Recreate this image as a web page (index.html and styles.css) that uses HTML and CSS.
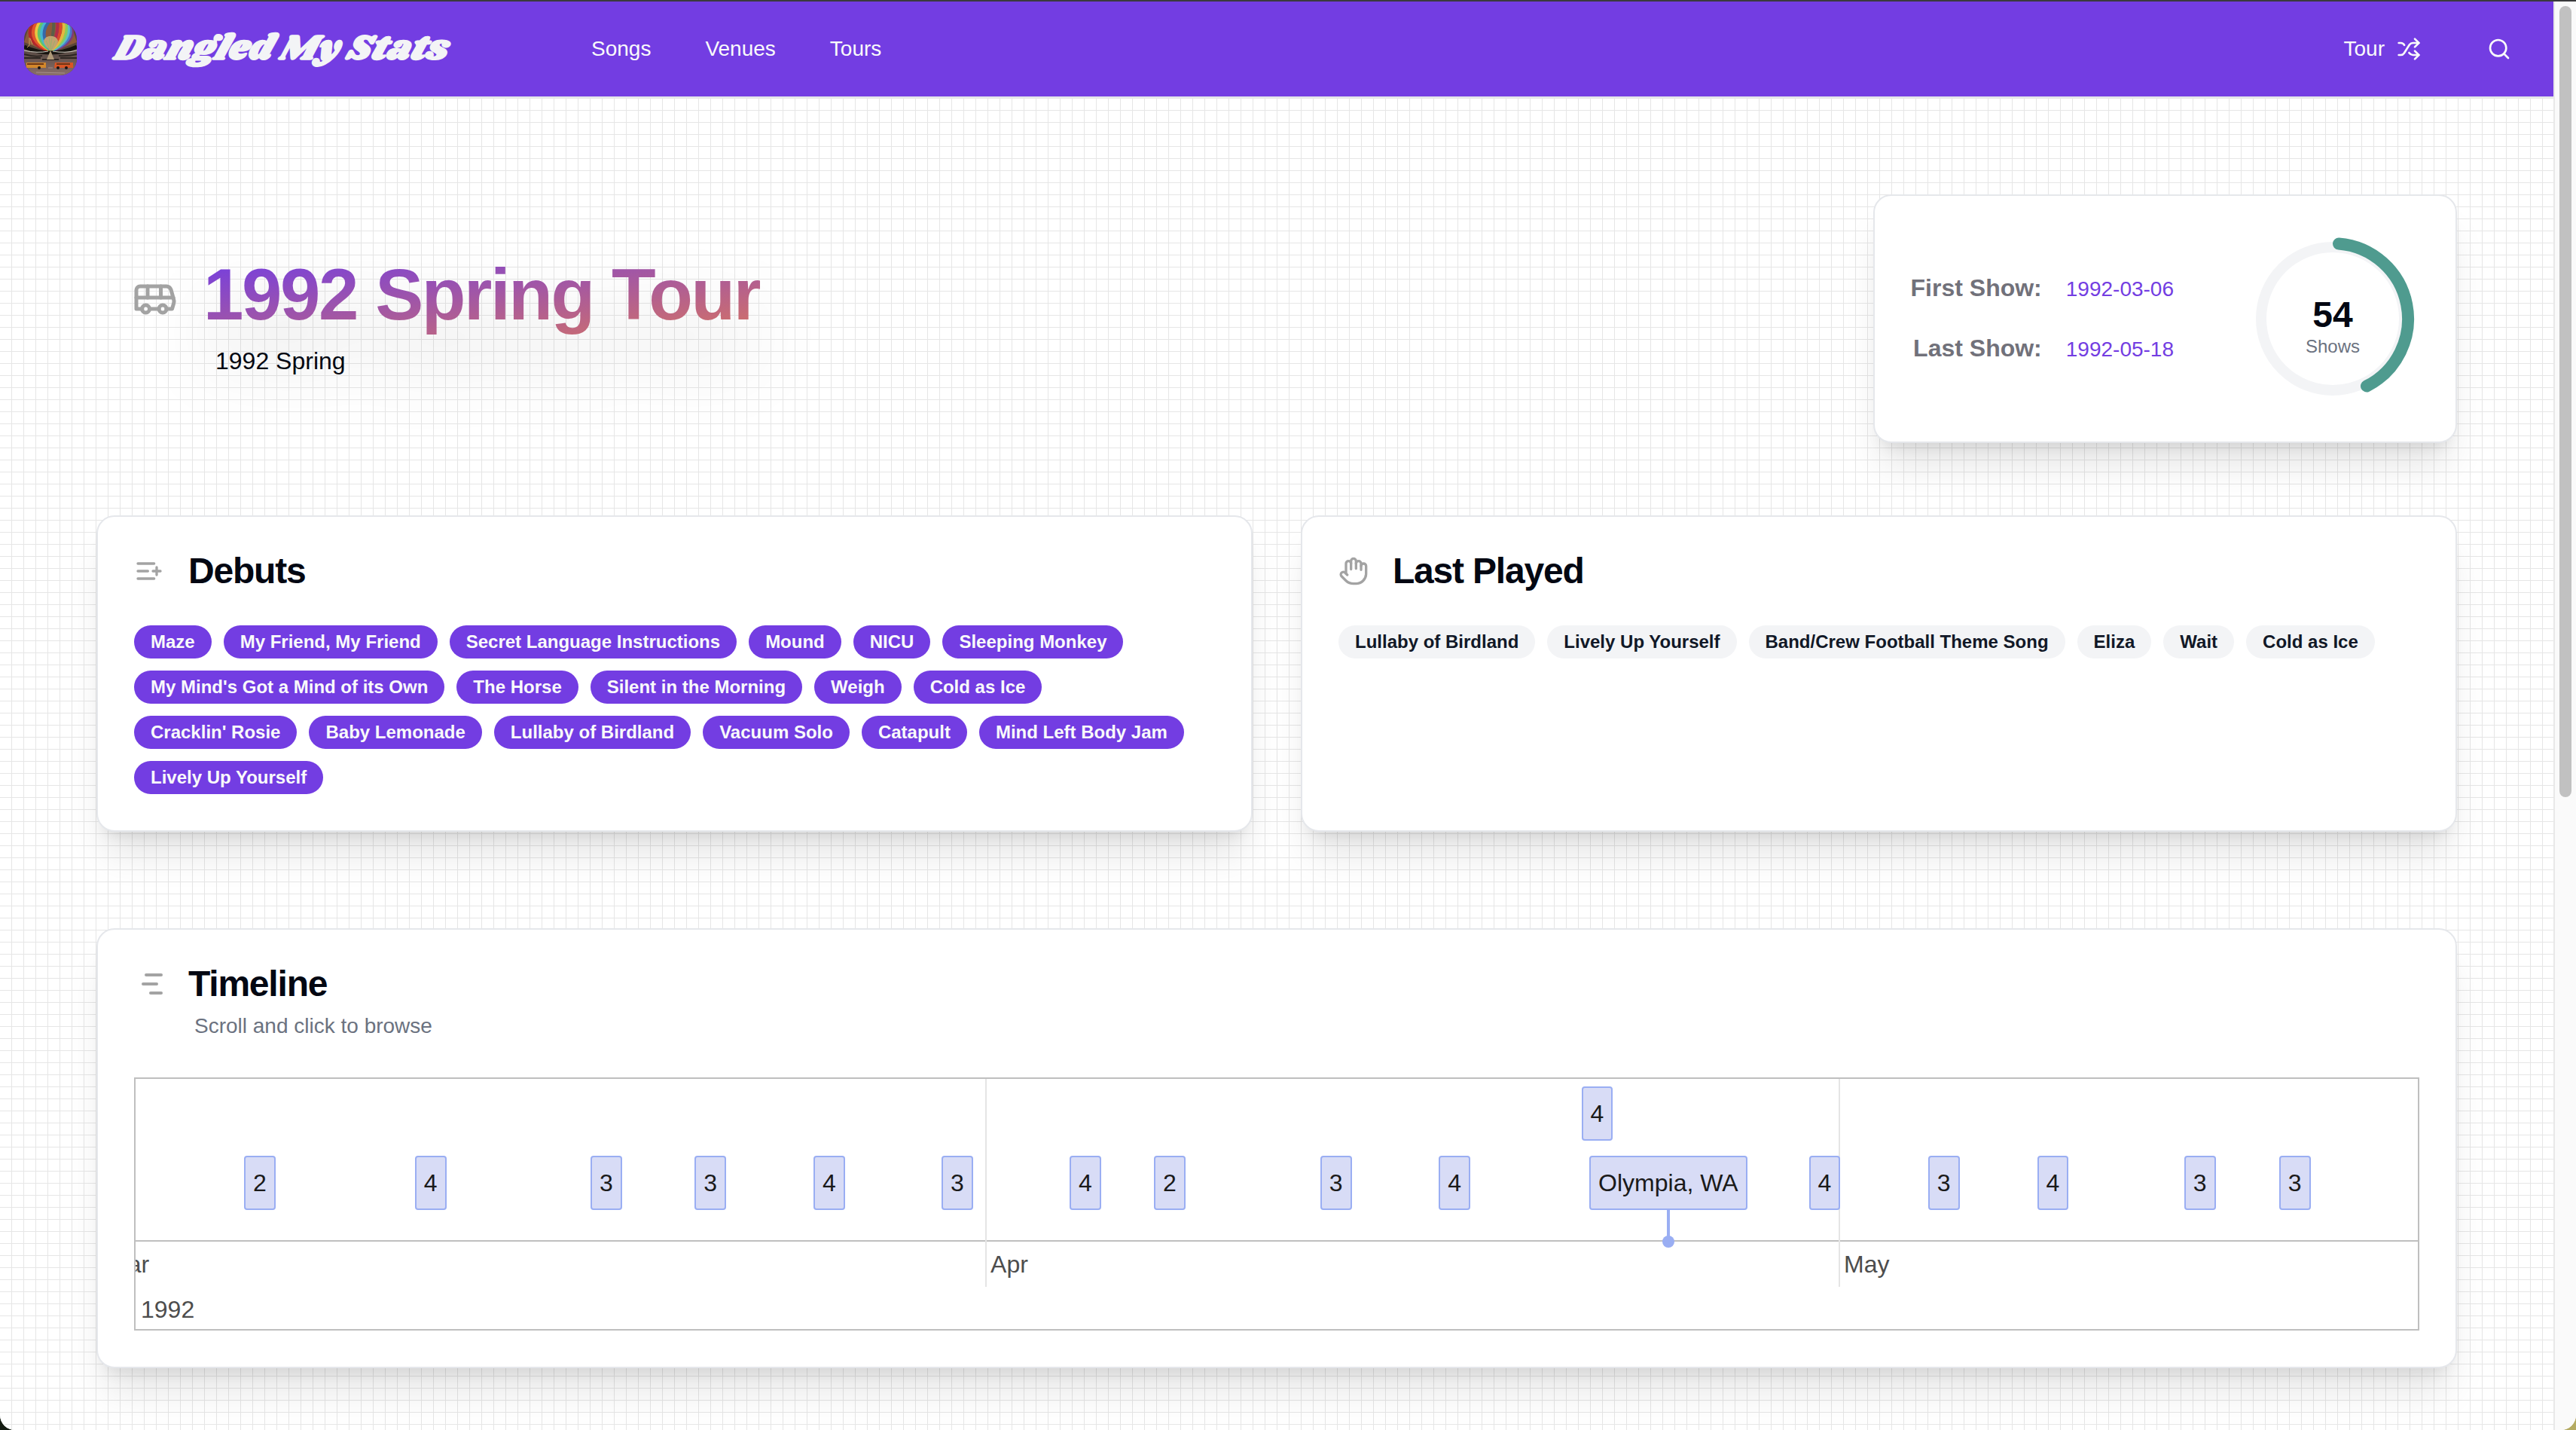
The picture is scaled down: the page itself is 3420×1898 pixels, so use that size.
FILE: index.html
```html
<!DOCTYPE html>
<html lang="en">
<head>
<meta charset="utf-8">
<meta name="viewport" content="width=device-width, initial-scale=1">
<title>1992 Spring Tour - Dangled My Stats</title>
<link rel="stylesheet" href="styles.css">
</head>
<body>
<div class="window">
  <div class="page">
    <header class="navbar">
      <a class="brand" href="#">
        <svg class="logo" viewBox="0 0 70 70" aria-hidden="true">
          <defs>
            <clipPath id="logo-clip"><rect width="70" height="70" rx="22"/></clipPath>
            <linearGradient id="floor" x1="0" y1="0" x2="0" y2="1">
              <stop offset="0" stop-color="#4b4039"/><stop offset="1" stop-color="#8a6f6a"/>
            </linearGradient>
          </defs>
          <g clip-path="url(#logo-clip)">
            <rect width="70" height="70" fill="#5a4638"/>
            <path d="M0 26 8 0h54l8 26-35 14Z" fill="#8d5a3a"/>
            <g fill="none" stroke-width="4">
              <path d="M13 -1C0 18 12 31 34 38" stroke="#b3262a"/>
              <path d="M17 -1C6 16 14 30 34 37" stroke="#e2552c"/>
              <path d="M21 -1C11 14 17 28 34 36" stroke="#ecc63f"/>
              <path d="M25 -1C15 14 20 27 34 36" stroke="#62c46a"/>
              <path d="M29 -1C18 14 24 26 34 35" stroke="#45b5d0"/>
              <path d="M33 -1C22 12 27 24 34 35" stroke="#3767a8"/>
              <path d="M59 -1C72 18 58 31 36 38" stroke="#7d3a7a"/>
              <path d="M60 4C66 18 56 30 36 37" stroke="#4a78c8"/>
              <path d="M58 3C62 16 54 29 36 37" stroke="#5cc0c4"/>
              <path d="M55 0C59 15 52 28 36 36" stroke="#8bcb5b"/>
              <path d="M52 -1C55 13 49 27 36 36" stroke="#e6b840"/>
              <path d="M48 -1C50 12 46 24 36 35" stroke="#d94a2c"/>
              <path d="M44 -1C46 11 42 22 36 34" stroke="#b02c48"/>
              <path d="M39 -1C40 9 38 18 35 30" stroke="#5a5f48"/>
            </g>
            <path d="M26 24a10 9 0 0 1 19 0c0 6-6 10-9 15-4-5-10-9-10-15Z" fill="#c2a270"/>
            <path d="M29 24l6 14 2-18M41 24l-5 13-3-18" fill="none" stroke="#9bb06a"/>
            <path d="M0 30q18 9 35 9t35-9v40H0Z" fill="url(#floor)"/>
            <path d="M0 32q18 8 35 8t35-8" fill="none" stroke="#17140f" stroke-width="5"/>
            <path d="M0 37q18 4 32 1M38 38q16 3 32-1" fill="none" stroke="#d6d2c8"/>
            <path d="M0 42q14 4 24 2M46 44q12 1 24-2M0 47h22M48 47h22M24 49h22" fill="none" stroke="#2d2622" stroke-width="2"/>
            <path d="M35 37l-5 12h10Z" fill="#b09a78"/>
            <path d="M7 20v10l-3 3M8 21l3 8" fill="none" stroke="#c9a15a"/>
            <path d="M3 53h26v7H3Z" fill="#d3872a"/>
            <path d="M41 53h24v7H40Z" fill="#d95424"/>
            <path d="M4 55h22M43 55h18" stroke="#6d3718" stroke-width="2"/>
            <circle cx="20" cy="60" r="2" fill="#1a1412"/><circle cx="45" cy="60" r="2" fill="#1a1412"/><circle cx="56" cy="60" r="2" fill="#1a1412"/>
            <path d="M16 66l38 1M32 60h6" stroke="#a58e88"/>
          </g>
        </svg>
        <span class="wordmark">Dangled My Stats</span>
      </a>
      <nav class="links">
        <a href="#">Songs</a>
        <a href="#">Venues</a>
        <a href="#">Tours</a>
      </nav>
      <div class="actions">
        <button class="nav-button" type="button">Tour
          <svg class="icon-sm" viewBox="0 0 24 24" aria-hidden="true"><path d="m18 14 4 4-4 4"/><path d="m18 2 4 4-4 4"/><path d="M2 18h1.973a4 4 0 0 0 3.3-1.7l5.454-8.6a4 4 0 0 1 3.3-1.7H22"/><path d="M2 6h1.972a4 4 0 0 1 3.6 2.2"/><path d="M22 18h-6.041a4 4 0 0 1-3.3-1.8l-.359-.45"/></svg>
        </button>
        <button class="nav-button" type="button" aria-label="Search">
          <svg class="icon-sm" viewBox="0 0 24 24" aria-hidden="true"><circle cx="11" cy="11" r="8"/><path d="m21 21-4.3-4.3"/></svg>
        </button>
      </div>
    </header>

    <main class="content">
      <section class="hero">
        <div class="hero-title">
          <svg class="icon-lg" viewBox="0 0 24 24" aria-hidden="true"><path d="M8 6v6"/><path d="M15 6v6"/><path d="M2 12h19.6"/><path d="M18 18h3s.5-1.7.8-2.8c.1-.4.2-.8.2-1.2 0-.4-.1-.8-.2-1.2l-1.4-5C20.1 6.8 19.1 6 18 6H4a2 2 0 0 0-2 2v10h3"/><circle cx="7" cy="18" r="2"/><path d="M9 18h5"/><circle cx="16" cy="18" r="2"/></svg>
          <div class="hero-text">
            <h1>1992 Spring Tour</h1>
            <p>1992 Spring</p>
          </div>
        </div>
        <div class="card stats">
          <dl class="dates">
            <dt>First Show:</dt><dd><a href="#">1992-03-06</a></dd>
            <dt>Last Show:</dt><dd><a href="#">1992-05-18</a></dd>
          </dl>
          <div class="ring">
            <svg viewBox="0 0 230 230" aria-hidden="true">
              <circle cx="115" cy="115" r="95" fill="none" stroke="#f3f4f6" stroke-width="14"/>
              <path d="M123 15.500A100 100 0 0 1 160 204.500" fill="none" stroke="#4f9b8f" stroke-width="16" stroke-linecap="round"/>
            </svg>
            <div class="ring-label"><strong>54</strong><span>Shows</span></div>
          </div>
        </div>
      </section>

      <div class="columns">
        <section class="card">
          <div class="card-head">
            <svg class="icon-md" viewBox="0 0 24 24" aria-hidden="true"><path d="M11 12H3"/><path d="M16 6H3"/><path d="M16 18H3"/><path d="M18 9v6"/><path d="M21 12h-6"/></svg>
            <h2>Debuts</h2>
          </div>
          <div class="badges">
            <a class="badge" href="#">Maze</a>
            <a class="badge" href="#">My Friend, My Friend</a>
            <a class="badge" href="#">Secret Language Instructions</a>
            <a class="badge" href="#">Mound</a>
            <a class="badge" href="#">NICU</a>
            <a class="badge" href="#">Sleeping Monkey</a>
            <a class="badge" href="#">My Mind's Got a Mind of its Own</a>
            <a class="badge" href="#">The Horse</a>
            <a class="badge" href="#">Silent in the Morning</a>
            <a class="badge" href="#">Weigh</a>
            <a class="badge" href="#">Cold as Ice</a>
            <a class="badge" href="#">Cracklin' Rosie</a>
            <a class="badge" href="#">Baby Lemonade</a>
            <a class="badge" href="#">Lullaby of Birdland</a>
            <a class="badge" href="#">Vacuum Solo</a>
            <a class="badge" href="#">Catapult</a>
            <a class="badge" href="#">Mind Left Body Jam</a>
            <a class="badge" href="#">Lively Up Yourself</a>
          </div>
        </section>
        <section class="card">
          <div class="card-head">
            <svg class="icon-md" viewBox="0 0 24 24" aria-hidden="true"><path d="M18 11V6a2 2 0 0 0-2-2a2 2 0 0 0-2 2"/><path d="M14 10V4a2 2 0 0 0-2-2a2 2 0 0 0-2 2v2"/><path d="M10 10.500V6a2 2 0 0 0-2-2a2 2 0 0 0-2 2v8"/><path d="M18 8a2 2 0 1 1 4 0v6a8 8 0 0 1-8 8h-2c-2.800 0-4.500-.860-5.990-2.340l-3.600-3.600a2 2 0 0 1 2.830-2.820L7 15"/></svg>
            <h2>Last Played</h2>
          </div>
          <div class="badges">
            <a class="badge muted" href="#">Lullaby of Birdland</a>
            <a class="badge muted" href="#">Lively Up Yourself</a>
            <a class="badge muted" href="#">Band/Crew Football Theme Song</a>
            <a class="badge muted" href="#">Eliza</a>
            <a class="badge muted" href="#">Wait</a>
            <a class="badge muted" href="#">Cold as Ice</a>
          </div>
        </section>
      </div>

      <section class="card">
        <div class="card-head timeline-head">
          <svg class="icon-gantt" viewBox="0 0 24 24" aria-hidden="true"><path d="M8 6h10"/><path d="M6 12h9"/><path d="M11 18h7"/></svg>
          <div>
            <h2>Timeline</h2>
            <p>Scroll and click to browse</p>
          </div>
        </div>
        <div class="timeline">
          <div class="plot">
            <button type="button" class="item" style="left:4.75%">2</button>
            <button type="button" class="item" style="left:12.24%">4</button>
            <button type="button" class="item" style="left:19.93%">3</button>
            <button type="button" class="item" style="left:24.5%">3</button>
            <button type="button" class="item" style="left:29.7%">4</button>
            <button type="button" class="item" style="left:35.31%">3</button>
            <button type="button" class="item" style="left:40.92%">4</button>
            <button type="button" class="item" style="left:44.62%">2</button>
            <button type="button" class="item" style="left:51.91%">3</button>
            <button type="button" class="item" style="left:57.1%">4</button>
            <button type="button" class="item upper" style="left:63.35%">4</button>
            <button type="button" class="item pinned" style="left:63.7%">Olympia, WA</button>
            <button type="button" class="item" style="left:73.32%">4</button>
            <button type="button" class="item" style="left:78.54%">3</button>
            <button type="button" class="item" style="left:83.32%">4</button>
            <button type="button" class="item" style="left:89.76%">3</button>
            <button type="button" class="item" style="left:93.92%">3</button>
          </div>
          <div class="months">
            <span class="month first">Mar</span>
            <span class="month" style="left:37.23%">Apr</span>
            <span class="month" style="left:74.62%">May</span>
          </div>
          <div class="year">1992</div>
          <div class="gridline" style="left:37.23%"></div>
          <div class="gridline" style="left:74.62%"></div>
        </div>
      </section>
    </main>
  </div>
  <div class="scrollbar"><div class="thumb"></div></div>
</div>
</body>
</html>
```
FILE: styles.css
```css
* { box-sizing: border-box; }

html { background: linear-gradient(to right, #141c12 50%, #b5ab62 50%); }

body {
  margin: 0;
  font-family: "Liberation Sans", Arial, sans-serif;
  font-size: 32px;
  line-height: 48px;
  color: #030712;
}

h1, h2, p, dl, dd { margin: 0; }
a { color: inherit; text-decoration: none; }
button { font: inherit; color: inherit; border: 0; background: none; padding: 0; cursor: pointer; }

.window {
  display: flex;
  height: 100vh;
  overflow: hidden;
  border-top: 2px solid #3a3a3c;
  border-radius: 0 0 20px 20px;
  background: #fff;
}

.page {
  flex: 1;
  min-width: 0;
  background-color: #fff;
  background-image:
    linear-gradient(to right, transparent 15px, #e6e6e6 15px),
    linear-gradient(to bottom, #e6e6e6 1px, transparent 1px);
  background-size: 16px 16px;
}

.scrollbar {
  width: 30px;
  padding: 6px 6px 0;
  border-left: 2px solid #e8e8e8;
  background: #fafafa;
}
.thumb { width: 16px; height: 1050px; max-height: 56%; border-radius: 8px; background: #c1c1c1; }

/* Header */
.navbar {
  display: flex;
  align-items: center;
  height: 128px;
  padding: 0 56px 0 32px;
  border-bottom: 2px solid #e5e7eb;
  background-color: #733de2;
  color: #f9fafb;
  font-size: 28px;
  line-height: 40px;
}
.brand { display: flex; align-items: center; gap: 48px; width: 753px; }
.logo { width: 70px; height: 70px; }
.wordmark {
  font-family: Shrikhand, "DejaVu Serif Condensed", "DejaVu Serif", serif;
  font-size: 48px;
  font-weight: 700;
  font-style: italic;
  line-height: 56px;
  color: #f3f4f6;
  white-space: nowrap;
}
.links { display: flex; gap: 72px; }
.actions { display: flex; align-items: center; gap: 88px; margin-left: auto; }
.nav-button { display: flex; align-items: center; gap: 16px; }

svg { flex: none; }
.icon-sm, .icon-md, .icon-lg, .icon-gantt {
  fill: none;
  stroke: currentColor;
  stroke-width: 2;
  stroke-linecap: round;
  stroke-linejoin: round;
}
.icon-sm { width: 32px; height: 32px; }
.icon-md { width: 40px; height: 40px; margin-right: 8px; color: #a3a3a3; }
.icon-gantt { width: 48px; height: 48px; color: #a3a3a3; }
.icon-lg { width: 60px; height: 60px; margin-top: 22px; color: #a3a3a3; }

/* Page body */
.content { padding: 128px 128px 82px; }

.card {
  padding: 48px;
  border: 2px solid #e5e7eb;
  border-radius: 24px;
  background: #fff;
  box-shadow: 0 40px 50px -10px rgba(0, 0, 0, .1), 0 16px 20px -12px rgba(0, 0, 0, .1);
}

.hero {
  display: flex;
  justify-content: space-between;
  align-items: center;
  margin-bottom: 96px;
  padding-left: 48px;
}
.hero-title { display: flex; gap: 34px; }
.hero h1 {
  padding-bottom: 12px;
  background: linear-gradient(to bottom right, #733de2, #d8745f);
  -webkit-background-clip: text;
  background-clip: text;
  color: transparent;
  font-size: 96px;
  line-height: 96px;
  letter-spacing: -0.025em;
  filter: drop-shadow(0 50px 50px rgba(0, 0, 0, .15));
}
.hero p { margin: 4px 0 0 16px; }

.stats { display: flex; align-items: center; gap: 96px; }
.dates {
  display: grid;
  grid-template-columns: auto auto;
  align-items: baseline;
  gap: 30px 32px;
}
.dates dt { color: #71717a; font-weight: 700; text-align: right; }
.dates dd { color: #733de2; font-size: 28px; }
.ring { display: grid; width: 230px; height: 230px; }
.ring > * { grid-area: 1 / 1; }
.ring-label {
  display: flex;
  flex-direction: column;
  align-items: center;
  justify-content: center;
  gap: 2px;
  padding-top: 24px;
}
.ring-label strong { font-size: 48px; line-height: 48px; }
.ring-label span { font-size: 24px; line-height: 32px; color: #6b7280; }

.columns {
  display: grid;
  grid-template-columns: 1fr 1fr;
  gap: 64px;
  margin-bottom: 128px;
}

.card-head { display: flex; align-items: center; gap: 24px; margin-bottom: 48px; }
.card-head h2 {
  font-size: 48px;
  line-height: 48px;
  letter-spacing: -0.025em;
}
.timeline-head { align-items: flex-start; }
.timeline-head p {
  margin: 12px 0 0 8px;
  color: #6b7280;
  font-size: 28px;
  line-height: 40px;
}

.badges { display: flex; flex-wrap: wrap; gap: 16px; }
.badge {
  padding: 6px 22px;
  border-radius: 22px;
  background: #733de2;
  color: #f9fafb;
  font-size: 24px;
  font-weight: 700;
  line-height: 32px;
}
.muted { background: #f3f4f6; color: #111827; }

/* Timeline */
.timeline {
  position: relative;
  overflow: hidden;
  border: 2px solid #bfbfbf;
  color: #4d4d4d;
}
.plot { position: relative; height: 216px; border-bottom: 2px solid #bfbfbf; }
.item {
  position: absolute;
  z-index: 1;
  top: 102px;
  height: 72px;
  padding: 0 10px;
  border: 2px solid #9aaef3;
  border-radius: 4px;
  background: #d8dcf6;
  color: #1a1a1a;
  line-height: 48px;
}
.upper { top: 10px; }
.pinned::before, .pinned::after {
  content: "";
  position: absolute;
  left: 50%;
  background: #9aaef3;
}
.pinned::before { top: 70px; width: 4px; height: 42px; margin-left: -2px; }
.pinned::after { top: 104px; width: 16px; height: 16px; margin-left: -8px; border-radius: 50%; }
.months { position: relative; height: 60px; line-height: 60px; }
.month { position: absolute; padding-left: 7px; }
.first { left: -37px; padding-left: 0; }
.year { height: 56px; padding-left: 7px; line-height: 60px; }
.gridline { position: absolute; top: 0; width: 2px; height: 276px; background: #e5e5e5; }
```
